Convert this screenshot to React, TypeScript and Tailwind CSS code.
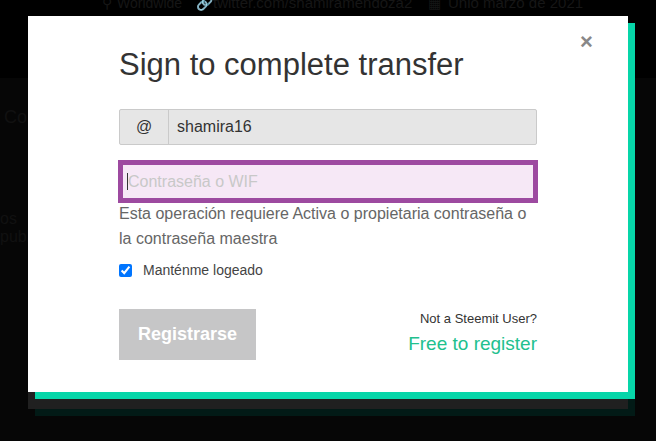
import React from "react";

export default function App() {
  return (
    <div
      className="relative w-[656px] h-[441px] overflow-hidden bg-[#060606]"
      style={{ fontFamily: '"Liberation Sans", Arial, sans-serif' }}
    >
      {/* faint background page */}
      <div className="absolute left-0 top-0 w-full h-[78px] bg-black" />
      <div className="absolute left-[102px] top-[-7px] text-[14px] text-[#161616] whitespace-nowrap">⚲</div>
      <div className="absolute left-[117px] top-[-7px] text-[14px] text-[#161616] whitespace-nowrap">Worldwide</div>
      <div className="absolute left-[196px] top-[-7px] text-[14px] text-[#161616] whitespace-nowrap">🔗</div>
      <div className="absolute left-[213px] top-[-8px] text-[15px] text-[#161616] whitespace-nowrap">twitter.com/shamiramendoza2</div>
      <div className="absolute left-[428px] top-[-7px] text-[14px] text-[#161616] whitespace-nowrap">▦</div>
      <div className="absolute left-[448px] top-[-8px] text-[15px] text-[#161616] whitespace-nowrap">Unió marzo de 2021</div>
      <div className="absolute left-[4px] top-[104px] text-[18px] text-[#111]">Co</div>
      <div className="absolute left-[0px] top-[207px] text-[16px] text-[#111]">os</div>
      <div className="absolute left-[0px] top-[225px] text-[16px] text-[#111]">publ</div>

      {/* modal */}
      <div className="absolute left-[28px] top-[16px] w-[600px] h-[376px] bg-white shadow-[7px_7px_0_#06d6a9,0_17px_0_#202020,7px_24px_0_#021a16]">
        <button className="absolute left-[552px] top-[15px] text-[#888] text-[22px] leading-none font-bold">
          ×
        </button>
        <div className="pl-[91px] pr-[91px] pt-[32px] flex flex-col">
          <h2 className="text-[31px] leading-[34px] text-[#333]">Sign to complete transfer</h2>

          <div className="mt-[27px] flex h-[36px] border border-[#cacaca] rounded-[2px] bg-[#e6e6e6]">
            <div className="w-[49px] flex items-center justify-center border-r border-[#cacaca] text-[16px] text-[#333]">
              @
            </div>
            <div className="flex items-center pl-[8px] text-[16px] text-[#333]">shamira16</div>
          </div>

          <div className="mt-[15px] -mx-[1px] h-[43px] border-[5px] border-[#9d4aa0] bg-[#f6e8f6] flex items-center pl-[4px]">
            <span className="w-px h-[17px] bg-[#333]" />
            <span className="text-[16px] text-[#c8c8c8]">Contraseña o WIF</span>
          </div>

          <p className="-mt-[2px] text-[16px] leading-[25px] text-[#666]">
            Esta operación requiere Activa o propietaria contraseña o la contraseña maestra
          </p>

          <label className="mt-[9px] flex items-center gap-[11px]">
            <input type="checkbox" defaultChecked className="w-[13px] h-[13px] m-0 accent-[#0075ff]" />
            <span className="text-[14px] text-[#444]">Manténme logeado</span>
          </label>

          <div className="mt-[28px] flex justify-between items-start">
            <div className="w-[137px] h-[51px] bg-[#c6c6c7] flex items-center justify-center text-white text-[18px] font-bold">
              Registrarse
            </div>
            <div className="flex flex-col items-end">
              <span className="text-[13px] text-[#333]">Not a Steemit User?</span>
              <span className="mt-[1px] text-[19px] text-[#22c08e]">Free to register</span>
            </div>
          </div>
        </div>
      </div>
    </div>
  );
}
